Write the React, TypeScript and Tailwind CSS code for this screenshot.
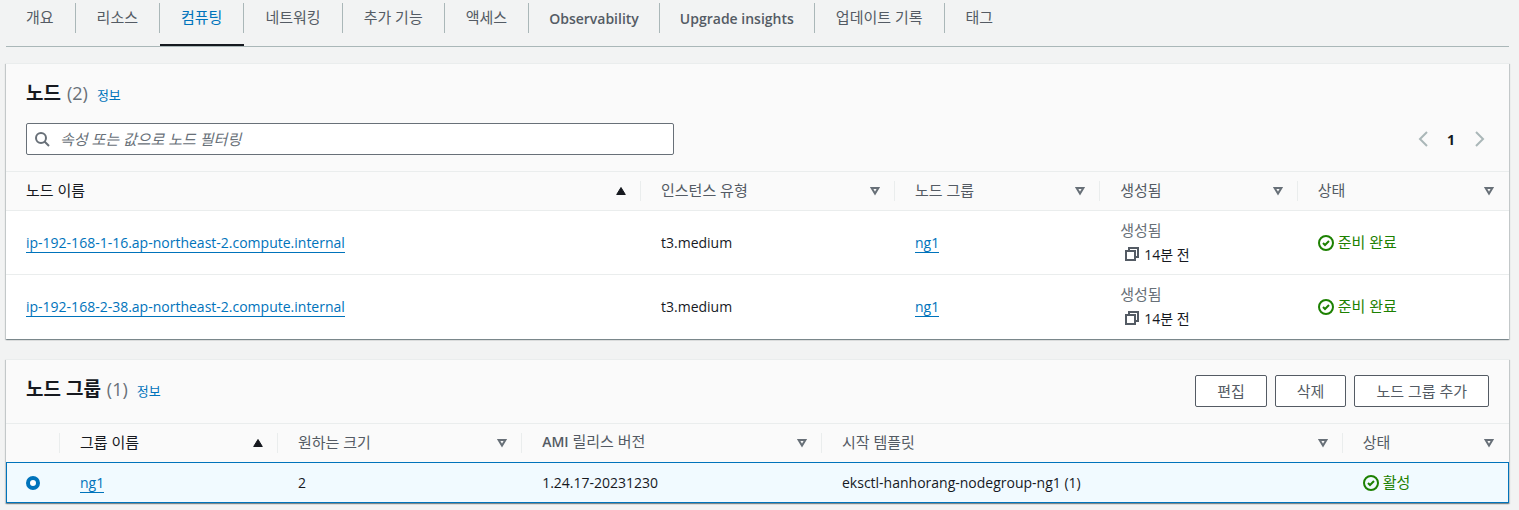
import React from "react";

const tabs = [
  "개요",
  "리소스",
  "컴퓨팅",
  "네트워킹",
  "추가 기능",
  "액세스",
  "Observability",
  "Upgrade insights",
  "업데이트 기록",
  "태그",
];

const nodes = [
  { name: "ip-192-168-1-16.ap-northeast-2.compute.internal", type: "t3.medium", group: "ng1" },
  { name: "ip-192-168-2-38.ap-northeast-2.compute.internal", type: "t3.medium", group: "ng1" },
];

function SortIcon({ active }: { active?: boolean }) {
  return active ? (
    <svg className="size-[10px] shrink-0" viewBox="0 0 10 10" aria-hidden="true">
      <path d="M5 1.5 9.3 8.5H.7z" fill="#16191f" stroke="#16191f" strokeLinejoin="round" />
    </svg>
  ) : (
    <svg className="size-[10px] shrink-0" viewBox="0 0 10 10" aria-hidden="true">
      <path d="M1.6 2H8.4L5 7.6z" fill="none" stroke="#687078" strokeWidth="2" />
    </svg>
  );
}

function Head({
  label,
  active,
  last,
}: {
  label: React.ReactNode;
  active?: boolean;
  last?: boolean;
}) {
  return (
    <th scope="col" className="h-[39px] border-y border-[#eaeded] bg-[#fafafa] p-0 text-left font-normal">
      <button
        type="button"
        className={
          "flex h-5 w-full items-center justify-between pl-5 text-[15px] leading-5 " +
          (last ? "pr-[15px] " : "border-r border-[#eaeded] pr-[14px] ") +
          (active ? "text-[#16191f]" : "text-[#545b64]")
        }
      >
        <span className="pb-[2px]">{label}</span>
        <SortIcon active={active} />
      </button>
    </th>
  );
}

function Status({ label }: { label: string }) {
  return (
    <span className="flex items-center gap-1 text-[15px] leading-6 text-[#1d8102]">
      <svg className="size-4 shrink-0" viewBox="0 0 16 16" fill="none" stroke="#1d8102" strokeWidth="2" aria-hidden="true">
        <circle cx="8" cy="8" r="7" />
        <path d="M5 8l2 2 4-4" />
      </svg>
      <span className="pb-[2px]">{label}</span>
    </span>
  );
}

function CopyIcon() {
  return (
    <svg className="size-[14px]" viewBox="0 0 14 14" fill="none" stroke="#545b64" strokeWidth="2" aria-hidden="true">
      <path d="M1 4h9v9H1z" />
      <path d="M4 4V1h9v9h-3" />
    </svg>
  );
}

function TextLink({ children }: { children: React.ReactNode }) {
  return (
    <a href="#" className="inline-block border-b border-[#0073bb] text-[14px] leading-[18px] text-[#0073bb]">
      {children}
    </a>
  );
}

function Title({ title, count }: { title: string; count: number }) {
  return (
    <div className="flex items-baseline">
      <h2 className="flex items-baseline gap-[6px] text-[19px] font-bold leading-7 text-[#16191f]">
        {title}
        <span className="text-[18px] font-normal text-[#687078]">({count})</span>
      </h2>
      <a href="#" className="ml-[9px] text-[13px] text-[#0073bb]">
        정보
      </a>
    </div>
  );
}

const card =
  "border-t border-[#eaeded] bg-white shadow-[0_1px_1px_0_rgba(0,28,36,0.3),1px_1px_1px_0_rgba(0,28,36,0.15),-1px_1px_1px_0_rgba(0,28,36,0.15)]";
const button =
  "h-8 rounded-[2px] border border-[#545b64] bg-white px-[21px] text-[15px] leading-5 text-[#545b64] whitespace-nowrap";

export default function App() {
  return (
    <div className="min-h-screen bg-[#f2f3f3] pb-[6px] pl-[6px] pr-[10px] font-['Open_Sans','Noto_Sans_CJK_KR',sans-serif] text-[14px] text-[#16191f]">
      <nav aria-label="클러스터" className="flex h-[47px] border-b border-[#aab7b8] pt-[3px]">
        {tabs.map((t, i) => (
          <a
            key={t}
            href="#"
            aria-current={t === "컴퓨팅" ? "page" : undefined}
            className={
              "flex h-[43px] flex-col whitespace-nowrap " +
              (t === "컴퓨팅" ? "text-[#0073bb] border-b-2 border-[#16191f]" : "text-[#545b64]")
            }
          >
            <span
              className={
                "flex h-[30px] items-center " +
                (i < tabs.length - 1 ? "border-r border-[#aab7b8] " : "") +
                (/^[A-Z]/.test(t)
                  ? "px-5 text-[14px] font-semibold"
                  : i === 0
                    ? "pb-[2px] pl-5 pr-[21px] text-[15px]"
                    : "px-[21px] pb-[2px] text-[15px]")
              }
            >
              {t}
            </span>
          </a>
        ))}
      </nav>

      <main className="mt-4 flex flex-col gap-5">
        <section className={card}>
          <div className="bg-[#fafafa] px-5 pb-4 pt-[15px]">
            <Title title="노드" count={2} />
            <div className="mt-4 flex items-center justify-between">
              <label className="flex h-8 w-[44.3%] items-center gap-[10px] rounded-[2px] border border-[#687078] bg-white px-[7px]">
                <svg className="size-4 shrink-0" viewBox="0 0 16 16" fill="none" stroke="#687078" strokeWidth="2" aria-hidden="true">
                  <circle cx="7" cy="7" r="5" />
                  <path d="m10.5 10.5 4.5 4.5" />
                </svg>
                <input
                  type="text"
                  aria-label="노드 필터링"
                  placeholder="속성 또는 값으로 노드 필터링"
                  className="min-w-0 flex-1 bg-transparent text-[15px] italic leading-5 outline-none placeholder:text-[#687078]"
                />
              </label>
              <div className="flex items-center gap-4 pr-[2px]">
                <button type="button" aria-label="이전 페이지">
                  <svg className="size-4" viewBox="0 0 16 16" fill="none" stroke="#aab7b8" strokeWidth="2" aria-hidden="true">
                    <path d="M12 1 5 8l7 7" />
                  </svg>
                </button>
                <button type="button" className="w-2 text-[14px] font-bold">
                  1
                </button>
                <button type="button" aria-label="다음 페이지">
                  <svg className="size-4" viewBox="0 0 16 16" fill="none" stroke="#aab7b8" strokeWidth="2" aria-hidden="true">
                    <path d="m5 1 7 7-7 7" />
                  </svg>
                </button>
              </div>
            </div>
          </div>
          <table className="w-full table-fixed border-collapse">
            <colgroup>
              <col className="w-[42.25%]" />
              <col className="w-[16.9%]" />
              <col className="w-[13.65%]" />
              <col className="w-[13.15%]" />
              <col />
            </colgroup>
            <thead>
              <tr>
                <Head label="노드 이름" active />
                <Head label="인스턴스 유형" />
                <Head label="노드 그룹" />
                <Head label="생성됨" />
                <Head label="상태" last />
              </tr>
            </thead>
            <tbody>
              {nodes.map((n) => (
                <tr key={n.name} className="h-16 border-b border-[#eaeded] last:border-b-0">
                  <td className="px-5">
                    <TextLink>{n.name}</TextLink>
                  </td>
                  <td className="px-5">{n.type}</td>
                  <td className="px-5">
                    <TextLink>{n.group}</TextLink>
                  </td>
                  <td className="px-5 pb-px text-[15px]">
                    <div className="leading-6 text-[#687078]">생성됨</div>
                    <div className="flex items-center gap-[5px] pl-[5px] text-[14px] leading-[25px]">
                      <button type="button" aria-label="복사">
                        <CopyIcon />
                      </button>
                      14분 전
                    </div>
                  </td>
                  <td className="px-5">
                    <Status label="준비 완료" />
                  </td>
                </tr>
              ))}
            </tbody>
          </table>
        </section>

        <section className={card}>
          <div className="flex items-start justify-between bg-[#fafafa] px-5 pb-4 pt-[15px]">
            <Title title="노드 그룹" count={1} />
            <div className="flex gap-2">
              <button type="button" className={button}>
                편집
              </button>
              <button type="button" className={button}>
                삭제
              </button>
              <button type="button" className={button}>
                노드 그룹 추가
              </button>
            </div>
          </div>
          <table className="w-full table-fixed border-collapse">
            <colgroup>
              <col className="w-[54px]" />
              <col className="w-[14.5%]" />
              <col className="w-[16.25%]" />
              <col className="w-[19.95%]" />
              <col className="w-[34.65%]" />
              <col />
            </colgroup>
            <thead>
              <tr>
                <th className="border-y border-[#eaeded] bg-[#fafafa] p-0">
                  <div className="h-5 border-r border-[#eaeded]" />
                </th>
                <Head label="그룹 이름" active />
                <Head label="원하는 크기" />
                <Head
                  label={
                    <>
                      <span className="text-[14px] font-semibold">AMI</span> 릴리스 버전
                    </>
                  }
                />
                <Head label="시작 템플릿" />
                <Head label="상태" last />
              </tr>
            </thead>
            <tbody>
              <tr className="h-[41px] bg-[#f1faff] outline outline-1 -outline-offset-1 outline-[#0073bb]">
                <td className="pl-5">
                  <input
                    type="radio"
                    name="group"
                    aria-label="ng1"
                    defaultChecked
                    className="block size-[14px] appearance-none rounded-full border-4 border-[#0073bb] bg-white"
                  />
                </td>
                <td className="px-5">
                  <TextLink>ng1</TextLink>
                </td>
                <td className="px-5">2</td>
                <td className="px-5">1.24.17-20231230</td>
                <td className="px-5">eksctl-hanhorang-nodegroup-ng1 (1)</td>
                <td className="px-5">
                  <Status label="활성" />
                </td>
              </tr>
            </tbody>
          </table>
        </section>
      </main>
    </div>
  );
}
